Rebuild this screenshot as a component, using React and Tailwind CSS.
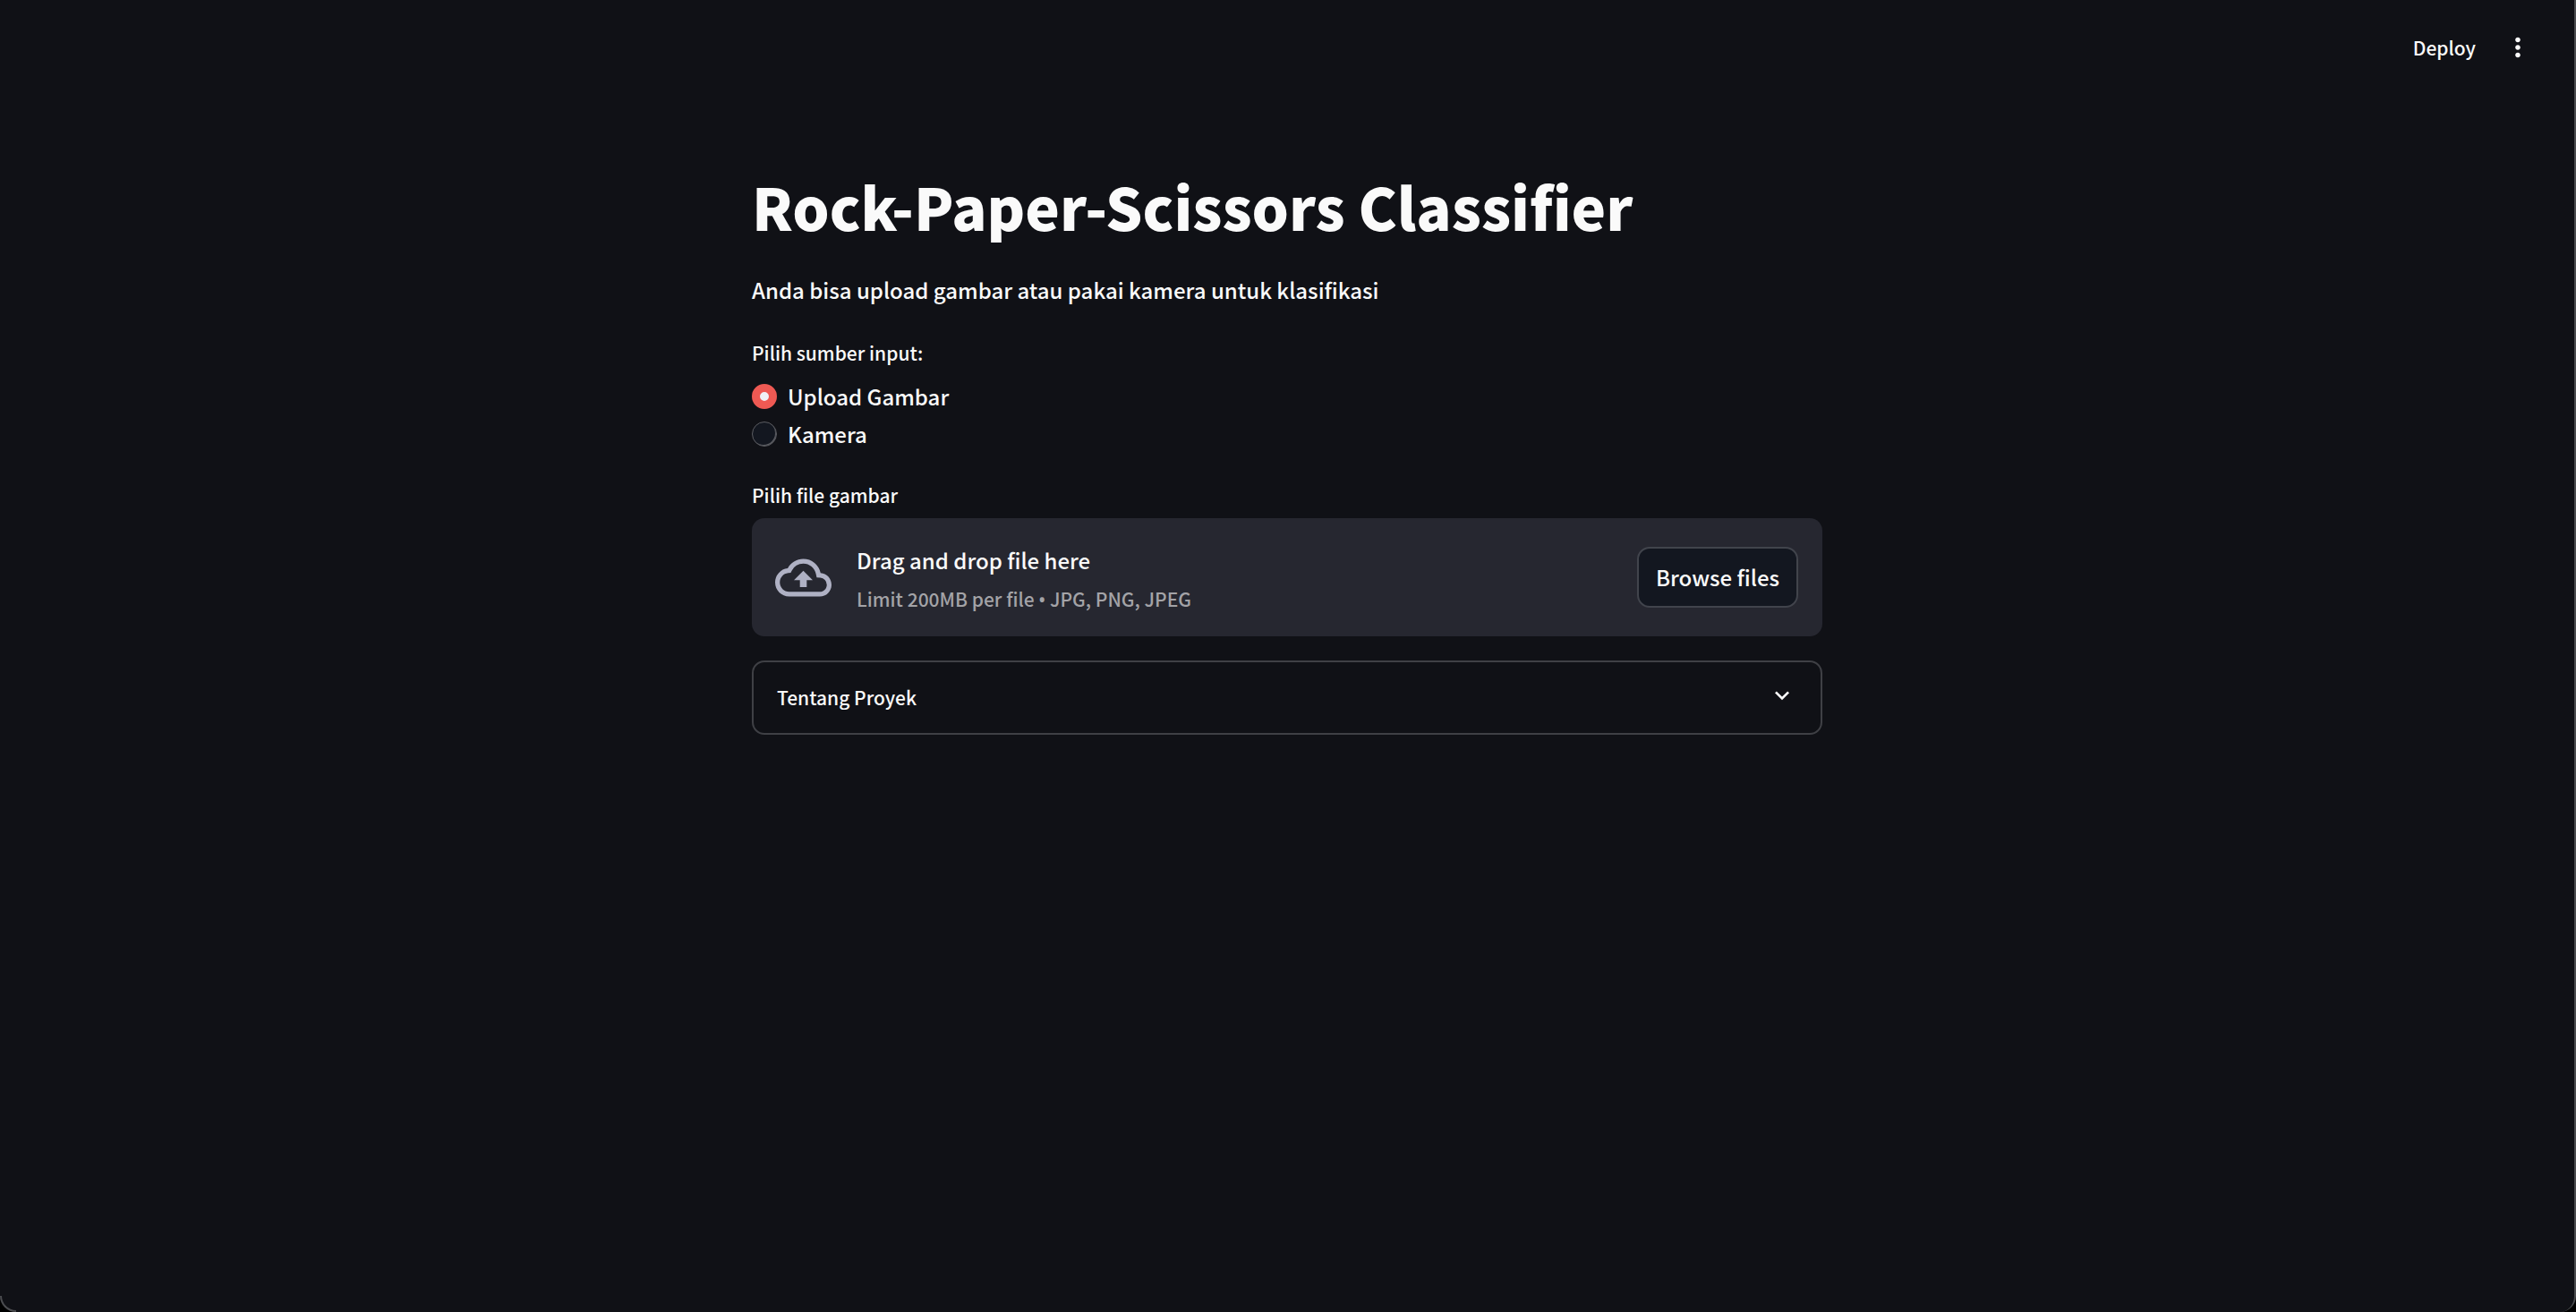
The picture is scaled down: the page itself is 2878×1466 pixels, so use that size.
import { useState } from "react";
import { MdExpandMore, MdMoreVert, MdOutlineCloudUpload } from "react-icons/md";

const sources = ["Upload Gambar", "Kamera"];

function Header() {
  return (
    <header className="flex h-[106px] items-center justify-end gap-[30px] pr-[46px]">
      <button className="text-[21px] leading-9">Deploy</button>
      <button aria-label="Menu">
        <MdMoreVert className="size-[34px]" />
      </button>
    </header>
  );
}

function SourcePicker() {
  const [source, setSource] = useState(sources[0]);
  return (
    <fieldset className="mt-[31px]">
      <legend className="mb-[10px] text-[21px] leading-9">Pilih sumber input:</legend>
      {sources.map((name) => (
        <label key={name} className="flex w-fit items-center gap-3 text-[24px] leading-[42px]">
          <input
            type="radio"
            name="source"
            checked={source === name}
            onChange={() => setSource(name)}
            className="size-7 appearance-none rounded-full border border-[#5c5d62] bg-[#131720] shadow-[inset_-1px_-1px_0_#5c5d62] checked:border-[9px] checked:border-[#ee5953] checked:bg-[#f0f2f6] checked:shadow-none"
          />
          {name}
        </label>
      ))}
    </fieldset>
  );
}

function FileUploader() {
  return (
    <section className="mt-[29px]">
      <h2 className="text-[21px] leading-9">Pilih file gambar</h2>
      <div className="mt-2 flex items-center gap-7 rounded-[14px] bg-[#262730] py-[23px] pr-[27px] pl-[26px]">
        <MdOutlineCloudUpload className="size-[63px] text-[#afb1c4]" />
        <div className="flex flex-1 flex-col gap-1 pt-[3px]">
          <span className="text-[24px] leading-[42px]">Drag and drop file here</span>
          <span className="text-[21px] leading-9 text-[#a3a3a7]">
            Limit 200MB per file <span className="[font-family:'Noto_Sans',sans-serif]">•</span> JPG, PNG, JPEG
          </span>
        </div>
        <button className="h-[68px] rounded-[14px] border-2 border-[#41444c] bg-[#131720] px-[19px] text-[24px]">
          Browse files
        </button>
      </div>
    </section>
  );
}

function AboutExpander() {
  return (
    <button
      aria-expanded="false"
      className="mt-[27px] flex w-full items-start justify-between rounded-[14px] border-2 border-[#3f4045] pt-[21px] pr-[27px] pb-[22px] pl-[26px] text-[21px] leading-9"
    >
      Tentang Proyek
      <MdExpandMore className="size-8" />
    </button>
  );
}

export default function App() {
  return (
    <div className="relative bg-black">
      <div className="min-h-screen rounded-b-[18px] border-r-2 border-[#4b4c4f] bg-[#101116] font-medium text-[#fafafa] [font-family:'Noto_Sans_CJK_SC',sans-serif]">
        <Header />
        <main className="mx-auto w-full max-w-[1196px] pt-[84px]">
          <h1 className="text-[65px] leading-[80px] font-black">Rock-Paper-Scissors Classifier</h1>
          <p className="mt-[33px] text-[24px] leading-[42px]">Anda bisa upload gambar atau pakai kamera untuk klasifikasi</p>
          <SourcePicker />
          <FileUploader />
          <AboutExpander />
        </main>
      </div>
      <span className="absolute bottom-0 left-0 size-[18px] rounded-bl-[18px] border-b-2 border-l-2 border-[#4b4c4f]" />
    </div>
  );
}
